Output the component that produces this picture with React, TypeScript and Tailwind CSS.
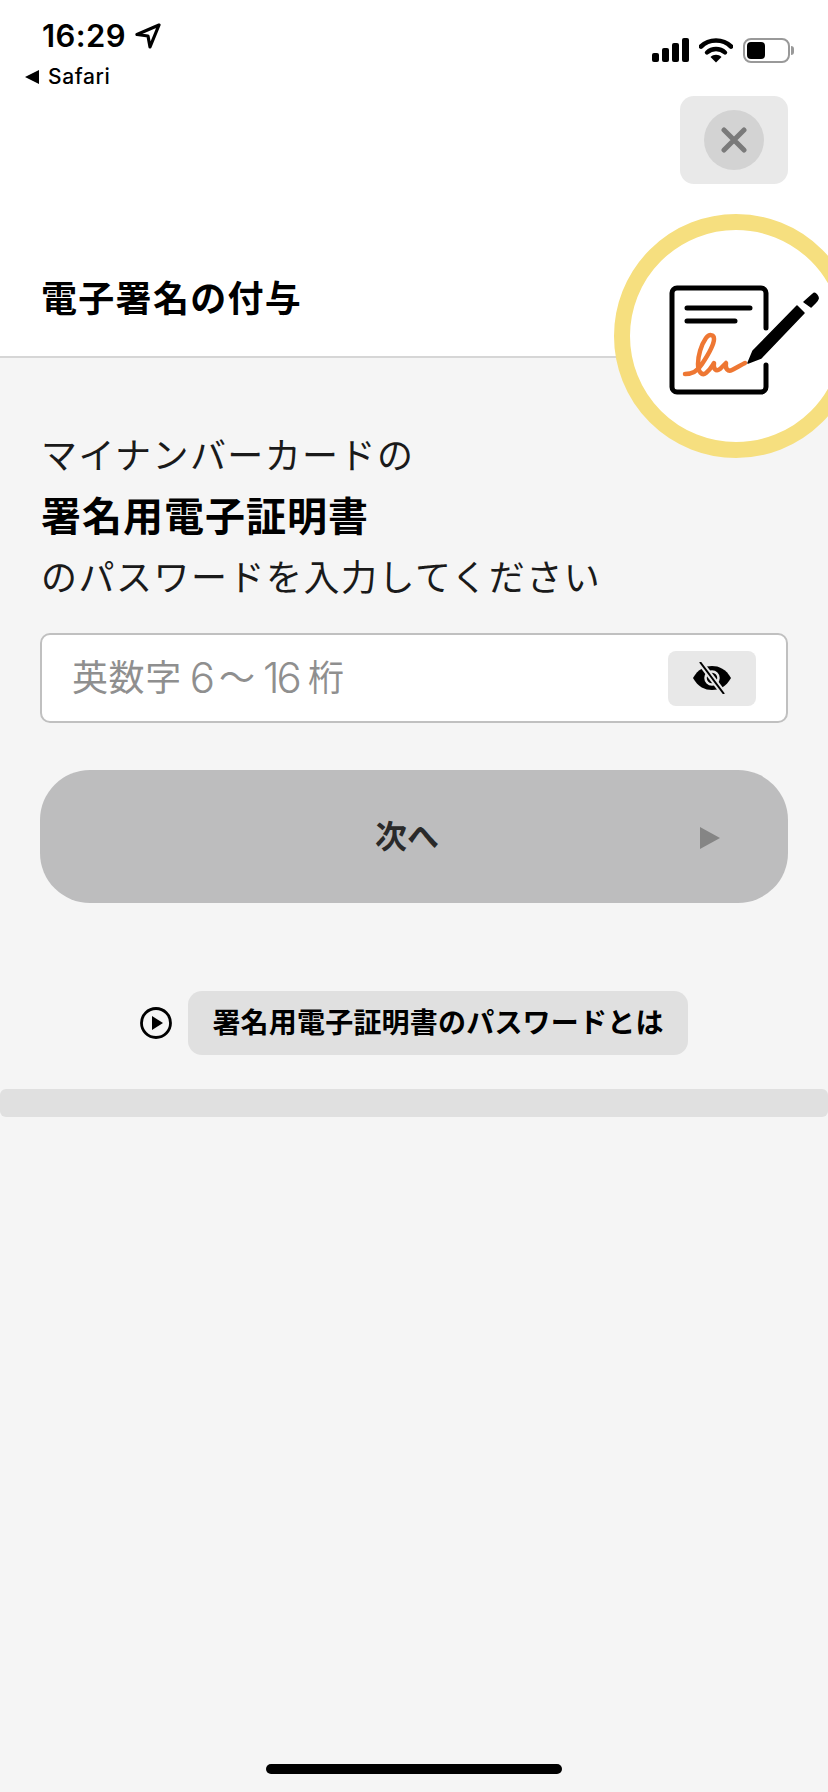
const jp = "font-['Inter','Noto_Sans_CJK_JP',sans-serif]";

function StatusIcons() {
  return (
    <div className="flex items-center">
      <svg width="38" height="24" viewBox="0 0 38 24" className="block">
        <rect x="0" y="15" width="7" height="9" rx="2" fill="#000" />
        <rect x="10" y="10" width="7" height="14" rx="2" fill="#000" />
        <rect x="20" y="5" width="7" height="19" rx="2" fill="#000" />
        <rect x="30" y="0" width="7" height="24" rx="2" fill="#000" />
      </svg>
      <svg width="34" height="26" viewBox="0 0 34 26" className="block ml-[9px]">
        <path d="M2 9.500C10 1.500 24 1.500 32 9.500" fill="none" stroke="#000" strokeWidth="4.600" strokeLinecap="round" />
        <path d="M8 15.500C13 10.800 21 10.800 26 15.500" fill="none" stroke="#000" strokeWidth="4.400" strokeLinecap="round" />
        <path d="M11.500 20C14.500 17 19.500 17 22.500 20L17 25.500Z" fill="#000" />
      </svg>
      <div className="ml-[10px] w-[47px] h-[25px] rounded-[8px] border-[2px] border-[#999999] p-[2px] flex">
        <div className="w-[18px] h-full rounded-[4px] bg-black" />
      </div>
      <div className="ml-[1px] w-[3px] h-[9px] rounded-r-full bg-[#999999]" />
    </div>
  );
}

function SignBadge() {
  return (
    <div className="absolute left-[614px] top-[214px] w-[244px] h-[244px] rounded-full bg-white border-[16px] border-[#f6df7f]">
      <svg width="244" height="244" viewBox="0 0 244 244" className="absolute left-[-16px] top-[-16px]">
        <path
          d="M152 114V79a5 5 0 0 0-5-5H63a5 5 0 0 0-5 5v94a5 5 0 0 0 5 5h84a5 5 0 0 0 5-5v-22"
          fill="none"
          stroke="#000"
          strokeWidth="5"
          strokeLinecap="round"
        />
        <path d="M73 94H136M73 107H121" fill="none" stroke="#000" strokeWidth="5" strokeLinecap="round" />
        <path
          d="M71 160C78 160 83 158 88 150C94 141 100 131 100 125C100 120 95 120 92 124C87 131 84 142 84 150C84 158 88 162 92 159C96 156 98 152 100 149C99 155 102 158 106 155C108 153 110 151 112 149C111 155 114 158 118 156C122 154 127 151 131 149"
          fill="none"
          stroke="#ee7733"
          strokeWidth="4.500"
          strokeLinecap="round"
          strokeLinejoin="round"
        />
        <path d="M134 149L139 137L183 92L190 99L147 144Z" fill="#000" stroke="#000" strokeWidth="1.500" strokeLinejoin="round" />
        <path d="M190 88L199 80C201 78 203 81 204 83C205 85 203 87 197 93Z" fill="#000" stroke="#000" strokeWidth="1.500" strokeLinejoin="round" />
      </svg>
    </div>
  );
}

export default function App() {
  return (
    <div className={`${jp} relative w-[828px] h-[1792px] overflow-hidden bg-[#f5f5f5] text-black flex flex-col`}>
      <header className="bg-white h-[358px] border-b-2 border-[#d6d6d6] flex flex-col">
        <div className="flex justify-between pl-[42px] pr-[34px] pt-[17px]">
          <div className="flex items-center self-start">
            <span className="text-[31px] leading-[38px] font-semibold tracking-[0.4px]">16:29</span>
            <svg width="26" height="26" viewBox="0 0 26 26" className="ml-[9px]">
              <path d="M24 2L2 11.500L13 13L15 24Z" fill="none" stroke="#000" strokeWidth="3.200" strokeLinejoin="round" />
            </svg>
          </div>
          <div className="pt-[20px]">
            <StatusIcons />
          </div>
        </div>
        <div className="flex items-center pl-[25px] mt-[2px] h-[24px]">
          <svg width="15" height="14" viewBox="0 0 15 14">
            <path d="M0 7L14 0V14Z" fill="#000" />
          </svg>
          <span className="ml-[8px] text-[21px] leading-[24px] font-medium tracking-[0.6px]">Safari</span>
        </div>
        <div className="flex justify-end pr-[40px] mt-[7px]">
          <button className="w-[108px] h-[88px] rounded-[14px] bg-[#e9e9e9] flex items-center justify-center">
            <span className="w-[60px] h-[60px] rounded-full bg-[#d3d3d3] flex items-center justify-center">
              <svg width="26" height="26" viewBox="0 0 26 26">
                <path d="M3 3L23 23M23 3L3 23" stroke="#7a7a7a" strokeWidth="5" strokeLinecap="round" />
              </svg>
            </span>
          </button>
        </div>
        <h1 className="pl-[41px] mt-[91px] text-[36px] leading-[48px] font-bold tracking-[1.3px]">電子署名の付与</h1>
      </header>
      <SignBadge />
      <main className="px-[40px] pt-[74px] flex flex-col">
        <p className="text-[36px] leading-[48px] pl-[1px] tracking-[1.4px] text-[#1a1a1a]">マイナンバーカードの</p>
        <p className="text-[40px] leading-[56px] pl-[1px] mt-[9px] font-bold tracking-[1px]">署名用電子証明書</p>
        <p className="text-[36px] leading-[48px] pl-[1px] mt-[9px] tracking-[1.5px] text-[#1a1a1a]">のパスワードを入力してください</p>
        <div className="mt-[31px] h-[90px] rounded-[10px] border-2 border-[#c0c0c0] bg-white flex items-center justify-between pl-[30px] pr-[30px]">
          <span className="flex items-center text-[36px] leading-[48px] text-[#8f8f8f]">
            <span className="tracking-[0.6px]">英数字</span>
            <span className="ml-[8px] text-[42px] font-light tracking-[-2px]">6</span>
            <span className="ml-[6px]">～</span>
            <span className="ml-[8px] text-[42px] font-light tracking-[-3px]">16</span>
            <span className="ml-[9px]">桁</span>
          </span>
          <button className="w-[88px] h-[55px] rounded-[8px] bg-[#e8e8e8] flex items-center justify-center">
            <svg width="40" height="32" viewBox="0 0 40 32">
              <path d="M1 16C6 7 13 4 20 4C27 4 34 7 39 16C34 25 27 28 20 28C13 28 6 25 1 16Z" fill="#000" />
              <circle cx="20" cy="16" r="6.500" fill="none" stroke="#e8e8e8" strokeWidth="2.500" />
              <path d="M8 0L32 32" stroke="#e8e8e8" strokeWidth="6" />
              <path d="M8 0L32 32" stroke="#000" strokeWidth="2" />
            </svg>
          </button>
        </div>
        <button className="relative mt-[47px] h-[133px] rounded-[50px] bg-[#bdbdbe] flex items-center justify-center pr-[14px]">
          <span className="text-[32px] leading-[44px] font-bold text-[#2a2a2a]">次へ</span>
          <svg width="20" height="22" viewBox="0 0 20 22" className="absolute right-[68px] top-[57px]">
            <path d="M0 0L20 11L0 22Z" fill="#858585" />
          </svg>
        </button>
        <div className="mt-[88px] flex items-center justify-center gap-[16px]">
          <svg width="32" height="32" viewBox="0 0 32 32">
            <circle cx="16" cy="16" r="14.500" fill="none" stroke="#000" strokeWidth="2.800" />
            <path d="M12 9L23 16L12 23Z" fill="#000" />
          </svg>
          <button className="h-[64px] px-[24px] rounded-[14px] bg-[#e0e0e0] text-[28px] leading-[40px] font-bold tracking-[0.2px]">
            署名用電子証明書のパスワードとは
          </button>
        </div>
      </main>
      <div className="mt-[34px] h-[28px] rounded-[6px] bg-[#e0e0e0]" />
      <div className="absolute left-[266px] bottom-[18px] w-[296px] h-[10px] rounded-full bg-black" />
    </div>
  );
}
